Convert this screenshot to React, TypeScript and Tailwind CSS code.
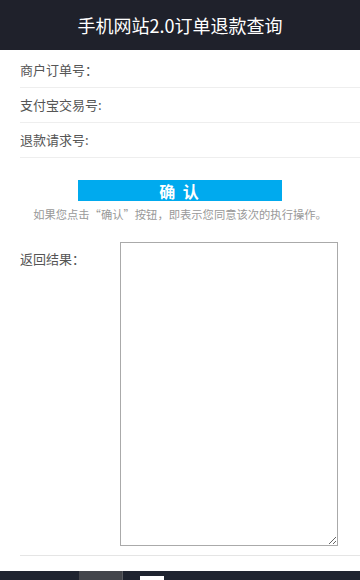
export default function App() {
  const font = { fontFamily: '"Microsoft YaHei", "Noto Sans CJK SC", "Liberation Sans", sans-serif' };
  const rows = ["商户订单号：", "支付宝交易号:", "退款请求号:"];

  return (
    <div className="w-[360px] h-[580px] bg-white flex flex-col overflow-hidden" style={font}>
      <header className="h-[50px] shrink-0 bg-[#1f212b] flex items-center justify-center">
        <h1 className="text-white text-[18px]">手机网站2.0订单退款查询</h1>
      </header>

      <div className="pl-5 pt-[3px]">
        {rows.map((label) => (
          <div key={label} className="h-[35px] flex items-center border-b border-[#eeeeee] text-[13px] text-[#555]">
            {label}
          </div>
        ))}
      </div>

      <div className="flex flex-col items-center pt-[22px]">
        <button className="w-[204px] h-[21px] bg-[#00aaee] text-white text-[16px] font-bold leading-none tracking-[2px]">
          确 认
        </button>
        <p className="mt-[5px] text-[11.3px] text-[#999]">如果您点击“确认”按钮，即表示您同意该次的执行操作。</p>
      </div>

      <div className="ml-5 mt-[19px] flex border-b border-[#e5e5e5] pb-[9px]">
        <span className="w-[100px] pt-[7px] text-[13px] text-[#555]">返回结果：</span>
        <textarea className="w-[218px] h-[304px] border border-[#aaa] resize" />
      </div>

      <div className="mt-auto h-[9px] bg-[#1f2430] flex">
        <div className="w-[79px]" />
        <div className="w-[44px] bg-[#44464c] border-r border-[#5a5c62]" />
        <div className="ml-[17px] mt-[5px] w-[24px] h-[4px] bg-white" />
      </div>
    </div>
  );
}
